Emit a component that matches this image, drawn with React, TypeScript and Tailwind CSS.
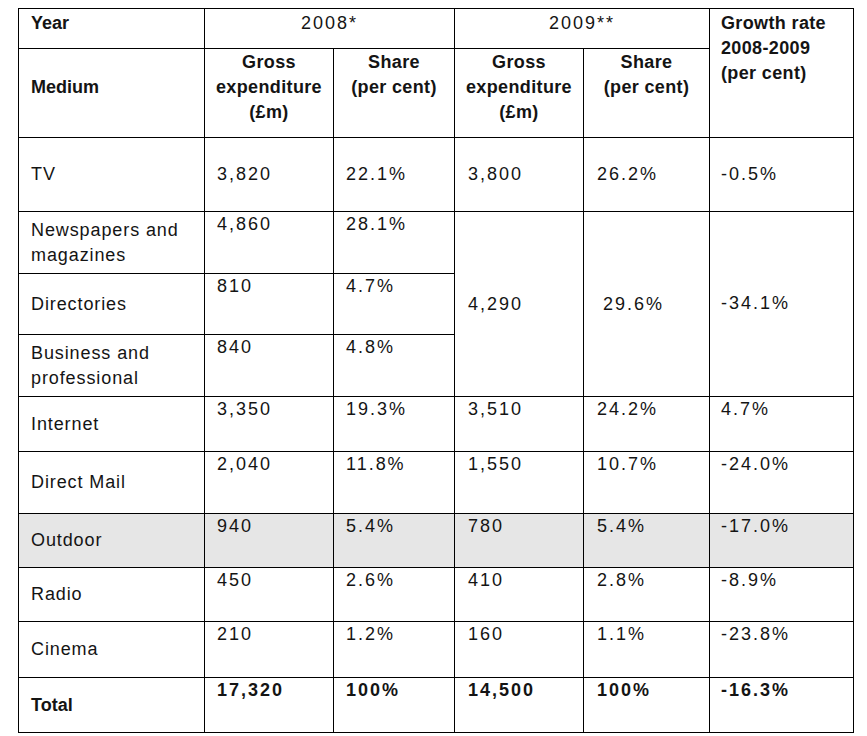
import * as React from "react";

const td = "border-[1.5px] border-black px-0 align-top";
const num = "tracking-[0.11em]";

function Txt({ children, className = "" }: { children: React.ReactNode; className?: string }) {
  return <div className={`pl-3 pr-2 ${className}`}>{children}</div>;
}

type Row = {
  medium: string;
  h: string;
  vals: (string | null)[];
  shade?: boolean;
  mid?: boolean;
  bold?: boolean;
};

// null = covered by the merged 2009 cells
const rows: Row[] = [
  { medium: "TV", h: "h-[74px]", vals: ["3,820", "22.1%", "3,800", "26.2%", "-0.5%"], mid: true },
  { medium: "Newspapers and magazines", h: "h-[62px]", vals: ["4,860", "28.1%", "MERGE", "MERGE", "MERGE"] },
  { medium: "Directories", h: "h-[61px]", vals: ["810", "4.7%", null, null, null] },
  { medium: "Business and professional", h: "h-[62px]", vals: ["840", "4.8%", null, null, null] },
  { medium: "Internet", h: "h-[55px]", vals: ["3,350", "19.3%", "3,510", "24.2%", "4.7%"] },
  { medium: "Direct Mail", h: "h-[62px]", vals: ["2,040", "11.8%", "1,550", "10.7%", "-24.0%"] },
  { medium: "Outdoor", h: "h-[54px]", vals: ["940", "5.4%", "780", "5.4%", "-17.0%"], shade: true },
  { medium: "Radio", h: "h-[54px]", vals: ["450", "2.6%", "410", "2.8%", "-8.9%"] },
  { medium: "Cinema", h: "h-[56px]", vals: ["210", "1.2%", "160", "1.1%", "-23.8%"] },
  { medium: "Total", h: "h-[55px]", vals: ["17,320", "100%", "14,500", "100%", "-16.3%"], bold: true },
];

const merged = ["4,290", "29.6%", "-34.1%"];

export default function App() {
  return (
    <div className="min-h-[736px] w-[867px] bg-white pl-[18px] pt-[8px] font-['Liberation_Sans',Arial,sans-serif] text-[18px] leading-[25px] text-[#141414]">
      <table className="table-fixed border-collapse">
        <colgroup>
          <col className="w-[186px]" />
          <col className="w-[129px]" />
          <col className="w-[121px]" />
          <col className="w-[129px]" />
          <col className="w-[126px]" />
          <col className="w-[144px]" />
        </colgroup>
        <thead>
          <tr className="h-[40px]">
            <td className={`${td} pt-[2px] font-bold`}>
              <Txt>Year</Txt>
            </td>
            <td colSpan={2} className={`${td} pt-[2px] text-center ${num}`}>
              2008*
            </td>
            <td colSpan={2} className={`${td} pt-[2px] text-center ${num}`}>
              2009**
            </td>
            <td rowSpan={2} className={`${td} pt-[2px] font-bold tracking-[0.02em]`}>
              <Txt className="pl-[11px]">
                Growth rate
                <br />
                2008-2009
                <br />
                (per cent)
              </Txt>
            </td>
          </tr>
          <tr className="h-[89px]">
            <td className={`${td} pb-3 !align-middle font-bold`}>
              <Txt>Medium</Txt>
            </td>
            {[0, 1].map((i) => (
              <React.Fragment key={i}>
                <td className={`${td} pt-[1px] text-center font-bold tracking-[0.02em]`}>
                  Gross
                  <br />
                  expenditure
                  <br />
                  (£m)
                </td>
                <td className={`${td} pt-[1px] text-center font-bold tracking-[0.02em]`}>
                  Share
                  <br />
                  (per cent)
                </td>
              </React.Fragment>
            ))}
          </tr>
        </thead>
        <tbody>
          {rows.map((r) => (
            <tr key={r.medium} className={`${r.h} ${r.shade ? "bg-[#e6e6e6]" : ""}`}>
              <td className={`${td} !align-middle ${r.bold ? "font-bold" : "tracking-[0.05em]"}`}>
                <Txt>{r.medium}</Txt>
              </td>
              {r.vals.map((v, i) => {
                if (v === null) return null;
                if (v === "MERGE") {
                  const k = i - 2;
                  return (
                    <td key={i} rowSpan={3} className={`${td} !align-middle ${num}`}>
                      <Txt className={k === 1 ? "pl-[19px]" : k === 2 ? "pl-[11px] pb-[2px]" : "pl-[13px]"}>
                        {merged[k]}
                      </Txt>
                    </td>
                  );
                }
                return (
                  <td
                    key={i}
                    className={`${td} ${r.mid ? "!align-middle" : ""} ${num} ${r.bold ? "font-bold tracking-[0.09em]" : ""}`}
                  >
                    <Txt className={i === 2 || i === 3 ? "pl-[13px]" : i === 4 ? "pl-[11px]" : ""}>{v}</Txt>
                  </td>
                );
              })}
            </tr>
          ))}
        </tbody>
      </table>
    </div>
  );
}
